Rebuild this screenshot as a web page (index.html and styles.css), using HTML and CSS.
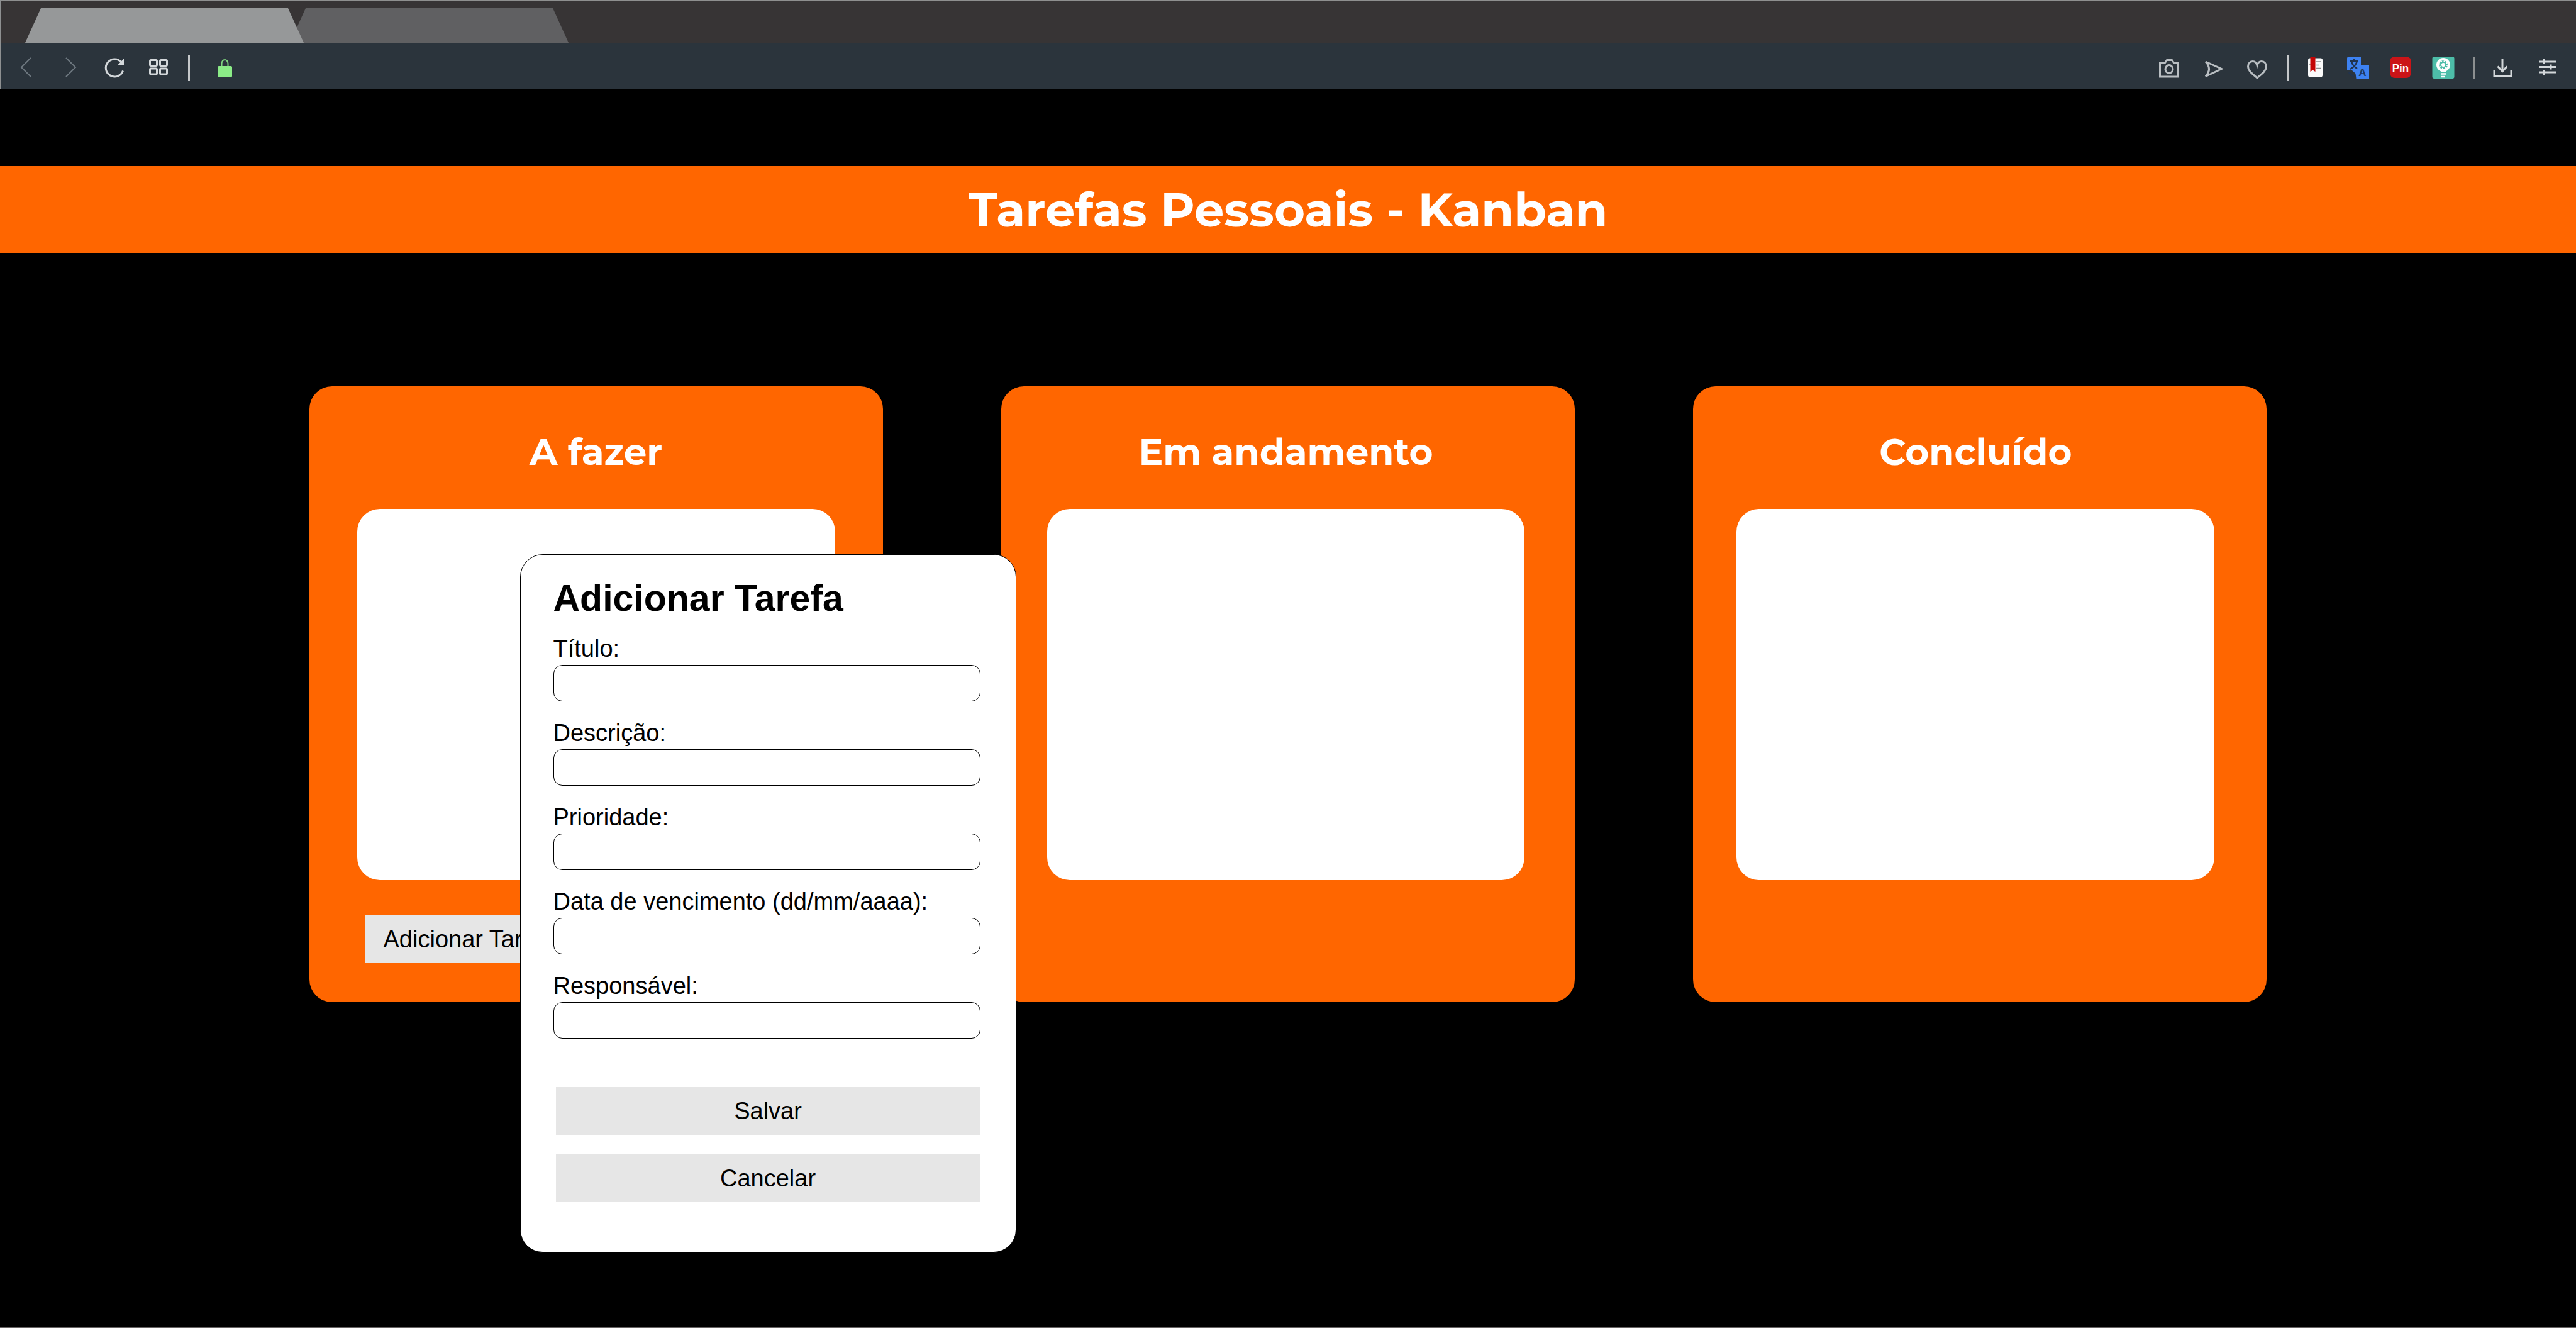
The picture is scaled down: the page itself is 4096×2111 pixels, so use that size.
FILE: index.html
```html
<!DOCTYPE html>
<html lang="pt-BR">
<head>
<meta charset="utf-8">
<title>Tarefas Pessoais - Kanban</title>
<link rel="stylesheet" href="styles.css">
</head>
<body>
<header class="browser">
  <div class="tabs">
    <button class="tab tab-active" type="button" aria-label="Aba 1"></button>
    <button class="tab" type="button" aria-label="Aba 2"></button>
  </div>
  <div class="toolbar">
    <div class="tools">
      <button class="tool dim" type="button" aria-label="Voltar"><svg viewBox="0 0 40 40"><path d="M27 4 12 19l15 15"/></svg></button>
      <button class="tool dim" type="button" aria-label="Avançar"><svg viewBox="0 0 40 40"><path d="M13 4l15 15-15 15"/></svg></button>
      <button class="tool" type="button" aria-label="Recarregar"><svg viewBox="0 0 40 40"><path class="thick" d="M33.500 24.500A14 14 0 1 1 31 11"/><path class="solid" d="M35 5v11H24.500z"/></svg></button>
      <button class="tool" type="button" aria-label="Acesso rápido"><svg viewBox="0 0 40 40"><g class="thick"><rect x="6.500" y="7.500" width="11" height="9" rx="1.500"/><rect x="22.500" y="7.500" width="11" height="9" rx="1.500"/><rect x="6.500" y="21" width="11" height="9" rx="1.500"/><rect x="22.500" y="21" width="11" height="9" rx="1.500"/></g></svg></button>
    </div>
    <span class="divider"></span>
    <button class="tool site-info" type="button" aria-label="Site seguro"><svg viewBox="0 0 40 40"><path class="lock-bow" d="M15.500 19v-6a5 6 0 0 1 10 0v6"/><rect class="lock-body" x="9" y="17" width="23" height="18" rx="2"/></svg></button>
    <span class="spacer"></span>
    <div class="tools page-tools">
      <button class="tool" type="button" aria-label="Captura"><svg viewBox="0 0 40 40"><path d="M5.500 34V12.500H13l3.500-5h8l3.500 5h6.500V34z"/><ellipse cx="20" cy="22" rx="6" ry="6.500"/></svg></button>
      <button class="tool" type="button" aria-label="Enviar"><svg viewBox="0 0 40 40"><path d="M8 10 33.500 21.500 8 33.500Q19 21.500 8 10z"/></svg></button>
      <button class="tool" type="button" aria-label="Favoritos"><svg viewBox="0 0 40 40"><path d="M20 16C18.500 10.500 15.500 9.500 13 9.500 8.500 9.500 5.500 13 5.500 18 5.500 26 15 31 20 36 25 31 34.500 26 34.500 18 34.500 13 31.500 9.500 27 9.500 24.500 9.500 21.500 10.500 20 16z"/></svg></button>
    </div>
    <span class="divider"></span>
    <div class="tools extensions">
      <button class="tool" type="button" aria-label="Leitura"><svg viewBox="0 0 40 40"><rect x="8" y="4.500" width="23" height="30" rx="3" fill="#fafafa" stroke="none"/><path d="M21 10h7M21 15.500h4M21 20.500h7M10 15h2" stroke="#8c8c8c" stroke-width="1.500"/><path d="M11.500 2.500h8V26l-4-2.500-4 2.500z" fill="#c40505" stroke="none"/></svg></button>
      <button class="tool" type="button" aria-label="Traduzir"><svg viewBox="0 0 40 40"><path d="M5 2h19v13.500h13V37H16.500l-1-8L10 24H2V5q0-3 3-3z" fill="#3d82f2" stroke="none"/><path d="M6.500 9H20M13 6v3M18 9q-2 8-11 13M9 10q2 7 9 11M5 27q3 5 8 6" stroke="#20334f" stroke-width="2.500"/><text x="26.500" y="33" class="glyph-a">A</text></svg></button>
      <button class="tool" type="button" aria-label="Salvar no Pinterest"><svg viewBox="0 0 40 40"><rect x="2" y="2" width="34" height="34" rx="8" fill="#cb1418" stroke="none"/><text x="19" y="26" class="glyph-pin">Pin</text></svg></button>
      <button class="tool" type="button" aria-label="Ideias"><svg viewBox="0 0 40 40"><rect x="1.500" y="2" width="35" height="35" rx="3" fill="#4dbda8" stroke="none"/><circle cx="19" cy="15" r="9" stroke="#fff" stroke-width="4"/><circle cx="19" cy="15" r="6" stroke="#fff" stroke-width="2" stroke-dasharray="2 2.700"/><circle cx="19" cy="15" r="3" fill="#fff" stroke="none"/><path d="M15 24.500h8v2h-8z" fill="#fff" stroke="none"/><path d="M15 29.500h8M16 34h6" stroke="#fff" stroke-width="2.500"/></svg></button>
    </div>
    <span class="divider divider-short"></span>
    <div class="tools">
      <button class="tool" type="button" aria-label="Downloads"><svg viewBox="0 0 40 40"><g class="thick"><path d="M20 6v19M12.500 17.500l7.500 8 7.500-8M7 24v8.500h27V24"/></g></svg></button>
      <button class="tool" type="button" aria-label="Configurações"><svg viewBox="0 0 40 40"><g class="thick"><path d="M8 10h27M8 18.500h27M8 27h27M16 6v8M27 14.500v8M16 23v8"/></g></svg></button>
    </div>
  </div>
</header>

<main class="page">
  <h1 class="banner">Tarefas Pessoais - Kanban</h1>

  <div class="board">
    <section class="column column-todo">
      <h2>A fazer</h2>
      <div class="cards"></div>
      <button class="btn btn-add" type="button">Adicionar Tarefa</button>

      <form class="modal" aria-labelledby="modal-title">
        <h3 id="modal-title">Adicionar Tarefa</h3>
        <div class="fields">
          <div class="field"><label for="titulo">Título:</label><input id="titulo" type="text"></div>
          <div class="field"><label for="descricao">Descrição:</label><input id="descricao" type="text"></div>
          <div class="field"><label for="prioridade">Prioridade:</label><input id="prioridade" type="text"></div>
          <div class="field"><label for="vencimento">Data de vencimento (dd/mm/aaaa):</label><input id="vencimento" type="text"></div>
          <div class="field"><label for="responsavel">Responsável:</label><input id="responsavel" type="text"></div>
        </div>
        <div class="actions">
          <button class="btn" type="submit">Salvar</button>
          <button class="btn" type="button">Cancelar</button>
        </div>
      </form>
    </section>

    <section class="column column-doing">
      <h2>Em andamento</h2>
      <div class="cards"></div>
    </section>

    <section class="column column-done">
      <h2>Concluído</h2>
      <div class="cards"></div>
    </section>
  </div>
</main>
</body>
</html>
```

FILE: styles.css
```css
* {
  box-sizing: border-box;
}

body {
  margin: 0;
  min-height: 100vh;
  background: #000;
  border-bottom: 1px solid #686464;
  font-family: "Liberation Sans", Arial, sans-serif;
}

button,
input {
  margin: 0;
  padding: 0;
  border: 0;
  font: inherit;
}

h1,
h2,
h3 {
  margin: 0;
}

/* Browser frame */
.browser {
  border-left: 1px solid #8e9091;
}

.tabs {
  display: flex;
  height: 68px;
  padding: 12px 39px 0;
  border-top: 1px solid #8e8f8f;
  background: #373435;
}

.tab {
  width: 443px;
  margin-right: -22px;
  background: #606062;
  clip-path: polygon(25px 0, calc(100% - 25px) 0, 100% 100%, 0 100%);
}

.tab-active {
  z-index: 1;
  background: #969899;
}

.toolbar {
  display: flex;
  align-items: center;
  height: 74px;
  padding: 6px 27px 0 21px;
  border-bottom: 1px solid #4b5257;
  background: #2b343c;
}

.tools {
  display: flex;
  gap: 30px;
}

.extensions {
  gap: 28px;
}

.tool {
  width: 40px;
  height: 40px;
  background: none;
  color: #d3d7da;
}

.dim {
  color: #6f7981;
}

.page-tools .tool {
  color: #b9bec2;
}

.site-info {
  width: 64px;
}

.tool svg {
  display: block;
  width: 40px;
  height: 40px;
  margin: 0 auto;
  fill: none;
  stroke: currentColor;
  stroke-width: 2;
}

.page-tools svg,
.tool .thick {
  stroke-width: 3;
}

.tool .solid {
  fill: currentColor;
  stroke: none;
}

.tool .lock-bow {
  stroke: #7fd67f;
}

.tool .lock-body {
  fill: #8bec87;
  stroke: none;
}

.glyph-a,
.glyph-pin {
  font-weight: 700;
  text-anchor: middle;
  stroke: none;
}

.glyph-a {
  font-size: 17px;
  fill: #1f3b66;
}

.glyph-pin {
  font-size: 17px;
  fill: #fff;
}

.divider {
  width: 3px;
  height: 40px;
  margin: 0 23px 0 27px;
  background: #c5c8ca;
}

.divider-short {
  height: 36px;
  background: #8c8f90;
}

.spacer {
  flex: 1;
}

/* Page */
.page {
  padding: 122px 0 118px;
}

.banner {
  padding: 21px 0;
  background: #f60;
  color: #fff;
  font: 700 75px/96px Montserrat, Inter, sans-serif;
  text-align: center;
}

.board {
  display: grid;
  grid-template-columns: repeat(3, 1fr);
  gap: 188px;
  margin-top: 212px;
  padding: 0 12%;
}

.column {
  position: relative;
  padding: 70px 76px 62px;
  border-radius: 36px;
  background: #f60;
}

.column-doing {
  padding-right: 80px;
  padding-left: 73px;
}

.column-done {
  padding-right: 83px;
  padding-left: 69px;
}

.column h2 {
  margin-bottom: 55px;
  color: #fff;
  font: 700 58px/70px Montserrat, Inter, sans-serif;
  text-align: center;
}

.cards {
  min-height: 590px;
  border-radius: 36px;
  background: #fff;
}

.btn {
  height: 76px;
  background: #e6e6e6;
  color: #000;
  font-size: 38px;
  line-height: 44px;
}

.btn-add {
  margin: 56px 0 0 12px;
  padding: 0 30px;
}

/* Task form, floating over the board */
.modal {
  position: absolute;
  top: 267px;
  left: 335px;
  z-index: 2;
  width: 789px;
  padding: 37px 56px 79px 52px;
  border: 1px solid #000;
  border-radius: 36px;
  background: #fff;
  color: #000;
}

.modal h3 {
  font-size: 59px;
  line-height: 64px;
}

.fields {
  display: flex;
  flex-direction: column;
  gap: 28px;
  margin-top: 26px;
}

.field {
  display: flex;
  flex-direction: column;
  gap: 4px;
}

.field label {
  font-size: 38px;
  line-height: 44px;
}

.field input {
  height: 58px;
  padding: 0 16px;
  border: 1px solid #000;
  border-radius: 14px;
  background: #fff;
  font-size: 38px;
}

.actions {
  display: flex;
  flex-direction: column;
  gap: 31px;
  margin: 77px 0 0 4px;
}
```
